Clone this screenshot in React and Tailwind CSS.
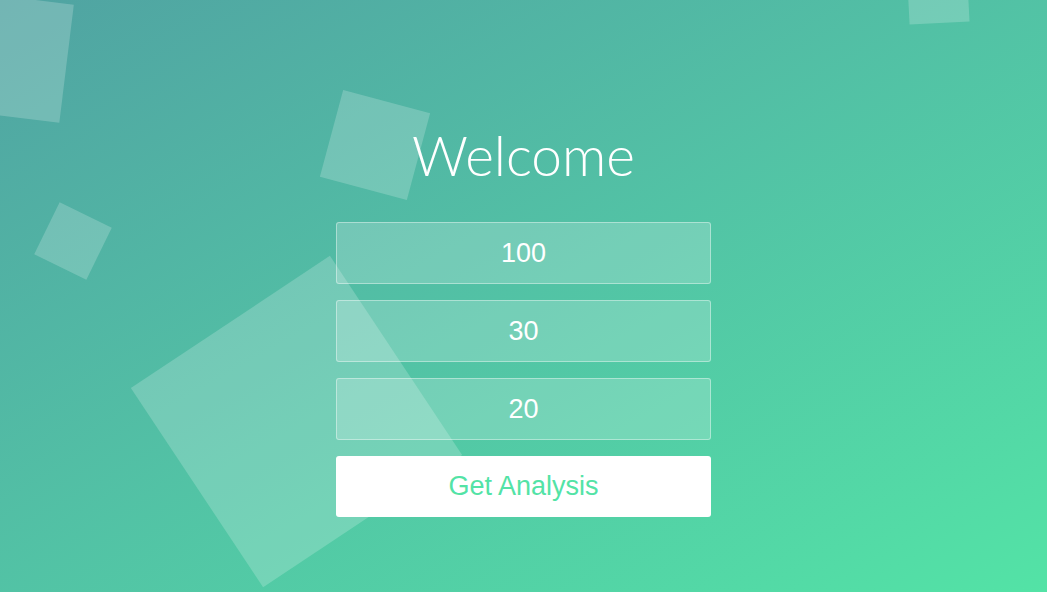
import { useState } from "react";

const squares = [
  { cls: "left-[-52px] top-[-3px] w-[119px] h-[119px] rotate-[7deg]" },
  { cls: "left-[330px] top-[100px] w-[90px] h-[90px] rotate-[15deg]" },
  { cls: "left-[44px] top-[212px] w-[58px] h-[58px] rotate-[26deg]" },
  { cls: "left-[177px] top-[302px] w-[239px] h-[239px] rotate-[-33.6deg]" },
  { cls: "left-[908px] top-[-37px] w-[60px] h-[60px] rotate-[-3deg]" },
];

export default function App() {
  const [values, setValues] = useState(["100", "30", "20"]);

  return (
    <div className="relative h-[592px] w-full overflow-hidden bg-linear-to-br from-[#50a3a2] to-[#53e3a6]">
      {squares.map((s, i) => (
        <div key={i} className={`absolute bg-white/20 ${s.cls}`} />
      ))}

      <div className="relative flex flex-col items-center pt-[123px]">
        <h1 className="mb-[34px] text-[55px] font-light leading-[65px] text-white [font-family:Lato,'Open_Sans',sans-serif]">
          Welcome
        </h1>

        <form
          className="flex w-[375px] flex-col gap-4"
          onSubmit={(e) => e.preventDefault()}
        >
          {values.map((v, i) => (
            <input
              key={i}
              type="text"
              value={v}
              onChange={(e) => {
                const next = [...values];
                next[i] = e.target.value;
                setValues(next);
              }}
              className="h-[62px] w-full rounded-[3px] border border-white/40 bg-white/20 text-center text-[27px] text-white outline-none [font-family:'Liberation_Sans',Arial,sans-serif]"
            />
          ))}
          <button
            type="submit"
            className="h-[61px] w-full rounded-[3px] bg-white text-[27px] text-[#53e3a6] [font-family:'Liberation_Sans',Arial,sans-serif]"
          >
            Get Analysis
          </button>
        </form>
      </div>
    </div>
  );
}
